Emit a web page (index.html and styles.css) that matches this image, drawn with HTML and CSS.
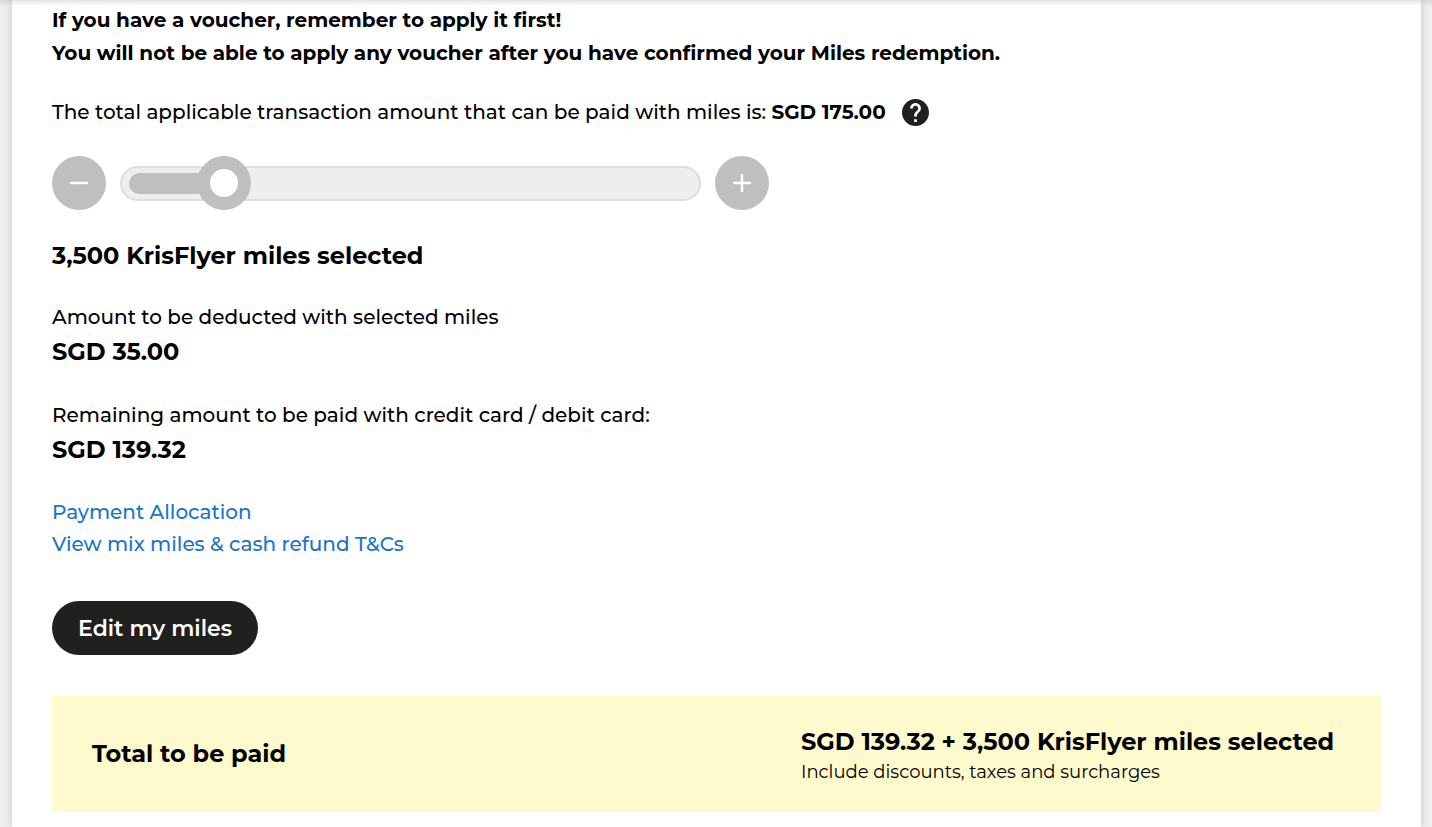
FILE: index.html
```html
<!DOCTYPE html>
<html lang="en">
<head>
    <meta charset="UTF-8">
    <meta name="viewport" content="width=device-width, initial-scale=1.0">
    <title>Pay with KrisFlyer miles</title>
    <link rel="stylesheet" href="styles.css">
</head>

<body>
    <main class="panel">
        <p class="voucher-note">
            If you have a voucher, remember to apply it first!<br>
            You will not be able to apply any voucher after you have confirmed your Miles redemption.
        </p>

        <div class="applicable">
            <label for="miles">The total applicable transaction amount that can be paid with miles is: <strong>SGD 175.00</strong></label>
            <button type="button" class="help" aria-label="Help">
                <svg viewBox="2 2 20 20" width="27" height="27">
                    <path fill="#20201e" d="M12 2C6.48 2 2 6.48 2 12s4.48 10 10 10 10-4.48 10-10S17.52 2 12 2zm1 17h-2v-2h2v2zm2.07-7.75l-.9.92C13.45 12.9 13 13.5 13 15h-2v-.5c0-1.1.45-2.1 1.17-2.83l1.24-1.26c.37-.36.59-.86.59-1.41 0-1.1-.9-2-2-2s-2 .9-2 2H8c0-2.21 1.79-4 4-4s4 1.79 4 4c0 .88-.36 1.68-.93 2.25z"/>
                </svg>
            </button>
        </div>

        <div class="miles-picker">
            <button type="button" class="step" aria-label="Fewer miles">
                <svg viewBox="0 0 20 20" width="20" height="20"><path d="M2 10h16"/></svg>
            </button>
            <div class="slider">
                <input type="range" id="miles" min="1500" max="16500" step="100" value="3500">
            </div>
            <button type="button" class="step" aria-label="More miles">
                <svg viewBox="0 0 20 20" width="20" height="20"><path d="M2 10h16M10 2v16"/></svg>
            </button>
        </div>

        <h2 class="selected">3,500 KrisFlyer miles selected</h2>

        <div class="amount">
            <p>Amount to be deducted with selected miles</p>
            <strong>SGD 35.00</strong>
        </div>

        <div class="amount">
            <p>Remaining amount to be paid with credit card / debit card:</p>
            <strong>SGD 139.32</strong>
        </div>

        <div class="links">
            <a href="#">Payment Allocation</a>
            <a href="#">View mix miles &amp; cash refund T&amp;Cs</a>
        </div>

        <button type="button" class="edit">Edit my miles</button>

        <section class="total">
            <h2>Total to be paid</h2>
            <div class="total-amount">
                <strong>SGD 139.32 + 3,500 KrisFlyer miles selected</strong>
                <p>Include discounts, taxes and surcharges</p>
            </div>
        </section>
    </main>
</body>
</html>
```
FILE: styles.css
```css
* {
    box-sizing: border-box;
}

body {
    margin: 0;
    padding: 0 11px 0 12px;
    background-color: #eee;
    color: #000;
    font-family: Montserrat, Inter, sans-serif;
    font-size: 20px;
    font-weight: 500;
    line-height: 32px;
}

/* shadow of the page header */
body::before {
    content: "";
    position: absolute;
    top: 0;
    left: 0;
    right: 0;
    height: 6px;
    background: linear-gradient(rgba(0, 0, 0, 0.1), rgba(0, 0, 0, 0));
}

h2,
p {
    margin: 0;
}

strong {
    font-weight: 700;
}

button {
    padding: 0;
    border: none;
    font-family: inherit;
    cursor: pointer;
}

.panel {
    min-height: 100vh;
    padding: 4px 40px 16px;
    background-color: #fff;
    box-shadow: 0 0 8px rgba(0, 0, 0, 0.15);
}

.voucher-note {
    font-weight: 700;
    line-height: 33px;
}

.applicable {
    display: flex;
    align-items: center;
    gap: 16px;
    margin-top: 26px;
}

.help {
    display: flex;
    background: none;
}

.miles-picker {
    display: flex;
    align-items: center;
    gap: 14px;
    max-width: 717px;
    margin-top: 28px;
}

.step {
    display: flex;
    flex: none;
    align-items: center;
    justify-content: center;
    width: 54px;
    height: 54px;
    border-radius: 50%;
    background-color: #bfbfbf;
}

.step svg {
    fill: none;
    stroke: #fff;
    stroke-width: 2.4;
    stroke-linecap: round;
}

.slider {
    display: flex;
    flex: 1;
    align-items: center;
    height: 35px;
    padding: 0 7px;
    border: 2px solid #ddd;
    border-radius: 18px;
    background-color: #eee;
}

.slider input {
    width: 100%;
    height: 21px;
    margin: 0;
    background: none;
    appearance: none;
}

.slider input::-webkit-slider-runnable-track {
    height: 21px;
    border-radius: 11px;
    background: linear-gradient(#bfbfbf, #bfbfbf) no-repeat 0 0 / 16% 100%;
}

.slider input::-webkit-slider-thumb {
    width: 54px;
    height: 54px;
    margin-top: -17px;
    border: 13px solid #bfbfbf;
    border-radius: 50%;
    background-color: #fff;
    appearance: none;
}

.selected,
.total h2,
.amount strong,
.total-amount strong {
    display: block;
    font-size: 24px;
    font-weight: 700;
}

.selected {
    margin-top: 30px;
}

.amount {
    margin-top: 28px;
}

.amount p {
    line-height: 34px;
}

.amount strong,
.total-amount strong {
    line-height: 36px;
}

.links {
    display: flex;
    flex-direction: column;
    align-items: flex-start;
    margin-top: 28px;
}

.links a {
    color: #1a73cc;
    text-decoration: none;
}

.edit {
    display: block;
    height: 54px;
    margin-top: 41px;
    padding: 0 26px;
    border-radius: 27px;
    background-color: #20201e;
    color: #fff;
    font-size: 22px;
    font-weight: 600;
}

.total {
    display: flex;
    align-items: center;
    justify-content: space-between;
    margin-top: 41px;
    padding: 28px 40px;
    background-color: #fffacd;
}

.total-amount {
    min-width: 540px;
}

.total-amount p {
    font-size: 18px;
    font-weight: 400;
    line-height: 24px;
}
```
